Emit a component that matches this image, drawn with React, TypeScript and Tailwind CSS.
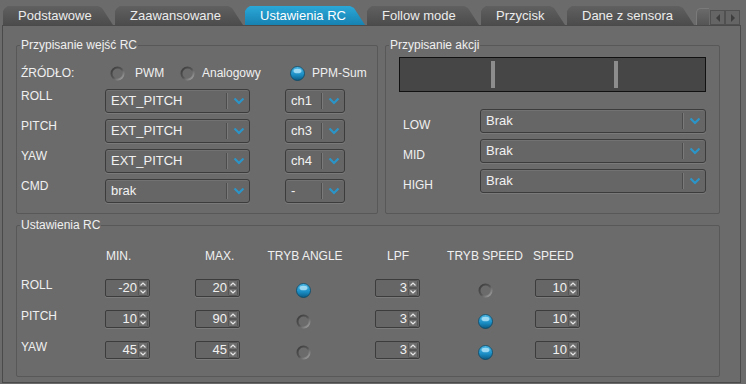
import React from "react"

const tabShape =
  "[clip-path:polygon(0_5px,2px_2px,5px_0,calc(100%_-_15px)_0,calc(100%_-_11px)_2px,100%_100%,0_100%)]"

const tabs = [
  { label: "Podstawowe", w: "w-[110px]" },
  { label: "Zaawansowane", w: "w-[128px]" },
  { label: "Ustawienia RC", w: "w-[120px]", active: true },
  { label: "Follow mode", w: "w-[112px]" },
  { label: "Przycisk", w: "w-[84px]" },
  { label: "Dane z sensora", w: "w-[127px]" },
]

function Chevron() {
  return (
    <svg width="12" height="8" viewBox="0 0 12 8">
      <path d="M1.5 1.5 L6 6 L10.5 1.5" fill="none" stroke="#2b95c8" strokeWidth="2.2" />
    </svg>
  )
}

function Select({ value, w }: { value: string; w: string }) {
  return (
    <div
      className={`${w} flex h-[24px] shrink-0 items-center rounded-[3px] border border-[#3c3c3c] bg-[#666666] shadow-[0_1px_0_#7a7a7a,inset_0_1px_0_#727272]`}
    >
      <span className="flex-1 truncate pl-[5px] text-[13px] leading-[16px] text-[#f2f2f2]">{value}</span>
      <span className="h-[16px] w-[2px] border-l border-[#4c4c4c] bg-[#7a7a7a]" />
      <span className="flex w-[21px] justify-center">
        <Chevron />
      </span>
    </div>
  )
}

function Spin({ value }: { value: string }) {
  return (
    <div className="flex h-[18px] w-[45px] items-center rounded-[2px] border border-[#3c3c3c] bg-[#666666] shadow-[0_1px_0_#7a7a7a]">
      <span className="flex-1 pr-[1px] text-right text-[13px] leading-[16px] text-[#f2f2f2]">{value}</span>
      <svg width="10" height="16" viewBox="0 0 10 16" className="mr-[1px] shrink-0">
        <rect x="0.5" y="0.5" width="9" height="7" rx="1" fill="#6e6e6e" stroke="#555" />
        <rect x="0.5" y="8.5" width="9" height="7" rx="1" fill="#6e6e6e" stroke="#555" />
        <path d="M2.5 5.5 L5 3 L7.5 5.5" fill="none" stroke="#e6e6e6" strokeWidth="1.2" />
        <path d="M2.5 10.5 L5 13 L7.5 10.5" fill="none" stroke="#e6e6e6" strokeWidth="1.2" />
      </svg>
    </div>
  )
}

function Radio({ on }: { on?: boolean }) {
  if (on)
    return (
      <svg width="15" height="15" viewBox="0 0 15 15" className="h-[15px] w-[15px] shrink-0">
        <defs>
          <linearGradient id="rOn" x1="0" y1="0" x2="0" y2="1">
            <stop offset="0" stopColor="#4fb9e6" />
            <stop offset="0.6" stopColor="#1a8dc4" />
            <stop offset="1" stopColor="#0c5a82" />
          </linearGradient>
        </defs>
        <circle cx="7.5" cy="7.5" r="7" fill="url(#rOn)" stroke="#0b4766" strokeWidth="0.8" />
        <ellipse cx="7.5" cy="5" rx="4" ry="2.3" fill="#c6f0ff" opacity="0.7" />
      </svg>
    )
  return (
    <svg width="15" height="15" viewBox="0 0 15 15" className="h-[15px] w-[15px] shrink-0">
      <defs>
        <linearGradient id="rOff" x1="0" y1="0" x2="1" y2="1">
          <stop offset="0" stopColor="#3c3c3c" />
          <stop offset="0.5" stopColor="#555" />
          <stop offset="1" stopColor="#a8a8a8" />
        </linearGradient>
      </defs>
      <circle cx="7.5" cy="7.5" r="6" fill="none" stroke="url(#rOff)" strokeWidth="2" />
    </svg>
  )
}

function Group({ title, className, children }: { title: string; className?: string; children: React.ReactNode }) {
  return (
    <fieldset className={`rounded-[2px] border border-[#585858] ${className ?? ""}`}>
      <legend className="ml-[3px] px-[1px] text-[12px] leading-[14px] text-[#f0f0f0]">{title}</legend>
      {children}
    </fieldset>
  )
}

const inputs = [
  { label: "ROLL", a: "EXT_PITCH", b: "ch1" },
  { label: "PITCH", a: "EXT_PITCH", b: "ch3" },
  { label: "YAW", a: "EXT_PITCH", b: "ch4" },
  { label: "CMD", a: "brak", b: "-" },
]

const rcRows = [
  { label: "ROLL", min: "-20", max: "20", angle: true, lpf: "3", speedMode: false, speed: "10" },
  { label: "PITCH", min: "10", max: "90", angle: false, lpf: "3", speedMode: true, speed: "10" },
  { label: "YAW", min: "45", max: "45", angle: false, lpf: "3", speedMode: true, speed: "10" },
]

export default function App() {
  return (
    <div className="h-[384px] w-[746px] overflow-hidden bg-[#6b6b6b] font-['Liberation_Sans',Arial,sans-serif] text-[#f0f0f0]">
      {/* tab strip */}
      <div className="flex h-[25px] items-end gap-[2px] pl-[3px]">
        {tabs.map((t) => (
          <div
            key={t.label}
            className={`${tabShape} ${t.w} flex h-[19px] items-center pl-[15px] text-[13px] ${
              t.active
                ? "bg-linear-to-b from-[#2ba8d8] to-[#1682b2] text-white"
                : "bg-linear-to-b from-[#606060] to-[#4c4c4c] text-[#ececec]"
            }`}
          >
            {t.label}
          </div>
        ))}
        <div className="h-[17px] w-[13px] rounded-tl-[5px] border-l border-t border-[#7a7a7a] bg-linear-to-b from-[#6a6a6a] to-[#555555]" />
        <div className="ml-[-1px] flex h-[15px] w-[15px] items-center justify-center border border-[#505050] bg-[#656565]">
          <span className="h-0 w-0 border-y-[4px] border-r-[4px] border-y-transparent border-r-[#3e3e3e]" />
        </div>
        <div className="ml-[-2px] flex h-[15px] w-[15px] items-center justify-center border border-[#505050] bg-[#656565]">
          <span className="h-0 w-0 border-y-[4px] border-l-[4px] border-y-transparent border-l-[#3e3e3e]" />
        </div>
      </div>

      {/* tab page */}
      <div className="ml-[2px] h-[358px] w-[739px] border border-[#4a4a4a] pl-[13px] pt-[12px]">
        <div className="flex gap-[7px]">
          <Group title="Przypisanie wejść RC" className="w-[362px]">
            <div className="pb-[10px] pl-[4px] pt-[11px] text-[12px] leading-[14px]">
              <div className="flex h-[20px] items-center">
                <span className="w-[89px]">ŹRÓDŁO:</span>
                <span className="flex w-[70px] items-center gap-[10px]">
                  <Radio />
                  PWM
                </span>
                <span className="flex w-[110px] items-center gap-[7px]">
                  <Radio />
                  Analogowy
                </span>
                <span className="flex items-center gap-[7px]">
                  <Radio on />
                  PPM-Sum
                </span>
              </div>
              <div className="mt-[6px] flex flex-col gap-[6px]">
                {inputs.map((r) => (
                  <div key={r.label} className="flex items-start">
                    <span className="w-[84px]">{r.label}</span>
                    <Select value={r.a} w="w-[145px]" />
                    <span className="w-[35px]" />
                    <Select value={r.b} w="w-[60px]" />
                  </div>
                ))}
              </div>
            </div>
          </Group>

          <Group title="Przypisanie akcji" className="w-[335px]">
            <div className="px-[13px] pb-[20px] pt-[5px] text-[12px] leading-[14px]">
              <div className="flex h-[35px] items-center border border-[#111111] bg-[#464646]">
                <span className="ml-[91px] h-[27px] w-[4px] bg-[#8d8d8d]" />
                <span className="ml-[119px] h-[27px] w-[4px] bg-[#8d8d8d]" />
              </div>
              <div className="mt-[17px] flex flex-col gap-[6px] pl-[4px]">
                {["LOW", "MID", "HIGH"].map((l) => (
                  <div key={l} className="flex items-start">
                    <span className="w-[77px] pt-[9px]">{l}</span>
                    <Select value="Brak" w="w-[226px]" />
                  </div>
                ))}
              </div>
            </div>
          </Group>
        </div>

        <Group title="Ustawienia RC" className="mt-[4px] w-[704px]">
          <div className="pb-[16px] pl-[4px] pt-[17px] text-[12px] leading-[14px]">
            <div className="grid h-[14px] grid-cols-[84px_90px_65px_90px_25px_60px_100px_60px]">
              <span />
              <span className="pl-[1px]">MIN.</span>
              <span className="pl-[10px]">MAX.</span>
              <span className="text-center">TRYB ANGLE</span>
              <span />
              <span className="pl-[12px]">LPF</span>
              <span className="text-center">TRYB SPEED</span>
              <span className="ml-[-2px]">SPEED</span>
            </div>
            <div className="mt-[16px] flex flex-col gap-[12px]">
              {rcRows.map((r) => (
                <div key={r.label} className="grid grid-cols-[84px_90px_65px_90px_25px_60px_100px_60px] items-start">
                  <span className="mt-[-1px]">{r.label}</span>
                  <Spin value={r.min} />
                  <Spin value={r.max} />
                  <span className="mt-[4px] flex justify-center pr-[4px]">
                    <Radio on={r.angle} />
                  </span>
                  <span />
                  <Spin value={r.lpf} />
                  <span className="mt-[4px] flex justify-center">
                    <Radio on={r.speedMode} />
                  </span>
                  <Spin value={r.speed} />
                </div>
              ))}
            </div>
          </div>
        </Group>
      </div>
    </div>
  )
}
